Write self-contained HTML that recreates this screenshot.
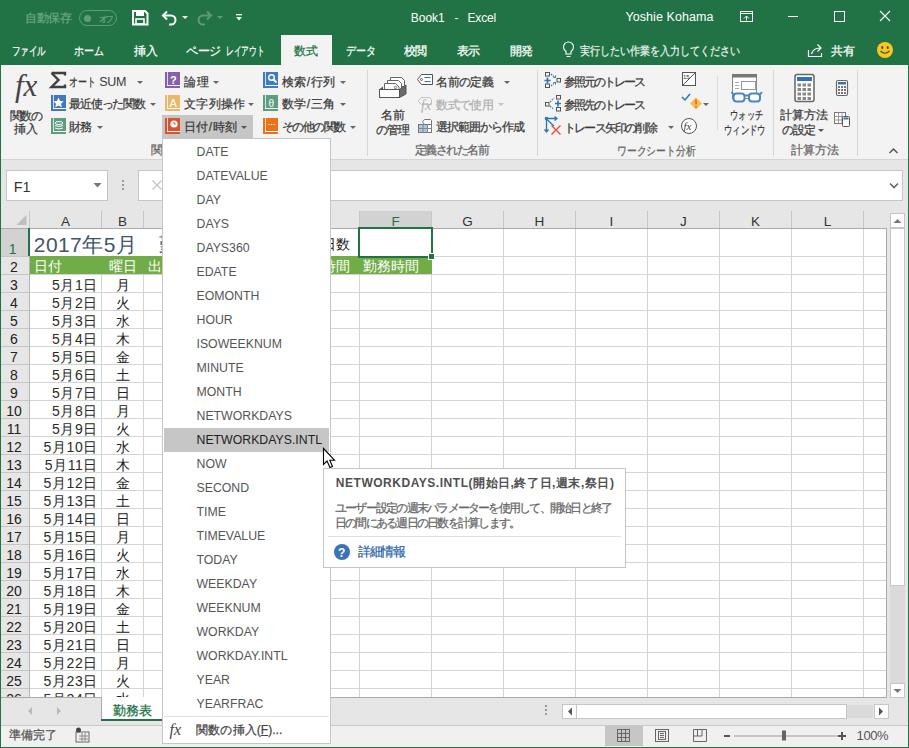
<!DOCTYPE html>
<html><head><meta charset="utf-8">
<style>
*{box-sizing:border-box;margin:0;padding:0}
html,body{width:909px;height:748px;overflow:hidden}
body{position:relative;background:#217346;font-family:"Liberation Sans",sans-serif;font-size:12px;color:#444}
.a{position:absolute;white-space:nowrap}
.j{-webkit-text-stroke:.25px}
.b{position:absolute}
#ribbon{position:absolute;left:1px;top:65px;width:907px;height:95px;background:#f3f3f3;border-bottom:1px solid #d5d5d5}
#fbar{position:absolute;left:1px;top:160px;width:907px;height:538px;background:#e6e6e6}
#tabs{position:absolute;left:1px;top:698px;width:907px;height:27px;background:#e6e6e6}
#status{position:absolute;left:1px;top:725px;width:907px;height:22px;background:#f0f0f0;border-top:1px solid #c8c8c8}
.sep{position:absolute;width:1px;background:#d2d2d2}
.dd{position:absolute;width:0;height:0;border-left:3px solid transparent;border-right:3px solid transparent;border-top:3px solid #666}
</style></head><body>
<!-- title bar icons -->
<div class="b" style="left:79px;top:10px;width:38px;height:16px;border:1px solid #5f9b77;border-radius:8px"></div>
<div class="b" style="left:83.5px;top:14.5px;width:7px;height:7px;border-radius:4px;background:#5f9b77"></div>
<svg class="a" style="left:0;top:0" width="909" height="66">
 <!-- save -->
 <path d="M133 11h12l2.5 2.5V24.5H133z" fill="none" stroke="#fff" stroke-width="2"/>
 <rect x="136" y="12" width="8" height="4" fill="#fff"/>
 <rect x="136" y="19" width="8" height="5" fill="none" stroke="#fff" stroke-width="1.6"/>
 <!-- undo -->
 <path d="M163 15.5h8a4.5 4.5 0 0 1 0 9h-2" fill="none" stroke="#fff" stroke-width="2"/>
 <path d="M167 11.5l-4 4 4 4" fill="none" stroke="#fff" stroke-width="2"/>
 <path d="M182 16h6l-3 3z" fill="#fff"/>
 <!-- redo -->
 <path d="M211 15.5h-8a4.5 4.5 0 0 0 0 9h2" fill="none" stroke="#5f9b77" stroke-width="2"/>
 <path d="M207 11.5l4 4-4 4" fill="none" stroke="#5f9b77" stroke-width="2"/>
 <path d="M217 16h6l-3 3z" fill="#5f9b77"/>
 <!-- customize -->
 <rect x="236" y="14" width="6" height="1.3" fill="#fff"/>
 <path d="M236 17h6l-3 3.5z" fill="#fff"/>
 <!-- ribbon display options -->
 <rect x="740.5" y="11.5" width="12" height="10" fill="none" stroke="#fff"/>
 <line x1="740.5" y1="13.5" x2="752.5" y2="13.5" stroke="#fff"/>
 <path d="M744 18.5l2.5-2.5 2.5 2.5M746.5 16v4.5" fill="none" stroke="#fff"/>
 <!-- minimize -->
 <line x1="788" y1="16.5" x2="798" y2="16.5" stroke="#fff"/>
 <!-- maximize -->
 <rect x="834.5" y="11.5" width="10" height="10" fill="none" stroke="#fff"/>
 <!-- close -->
 <path d="M880 11l10 10M890 11l-10 10" stroke="#fff" stroke-width="1.1"/>
 <!-- active tab -->
 <rect x="281" y="35" width="51" height="31" fill="#f3f3f3"/>
 <!-- lightbulb -->
 <path d="M566 54v-2.5c-1.8-1.2-2.5-2.8-2.5-4.5a5 5 0 0 1 10 0c0 1.7-.7 3.3-2.5 4.5V54z" fill="none" stroke="#fff" stroke-width="1.1"/>
 <line x1="566.5" y1="56.5" x2="570.5" y2="56.5" stroke="#fff" stroke-width="1.1"/>
 <!-- share -->
 <path d="M808.5 50v6.5h13V53" fill="none" stroke="#fff" stroke-width="1.2"/>
 <path d="M811.5 54c1-4 4-6 9-6M817.5 44.5l3.5 3.5-3.5 3.5" fill="none" stroke="#fff" stroke-width="1.2"/>
 <!-- smiley -->
 <circle cx="885" cy="50" r="8" fill="#f7c81e"/>
 <ellipse cx="882.3" cy="47.5" rx="1" ry="1.5" fill="#4a3f2a"/>
 <ellipse cx="887.7" cy="47.5" rx="1" ry="1.5" fill="#4a3f2a"/>
 <path d="M880.5 51q4.5 4.5 9 0" fill="none" stroke="#4a3f2a" stroke-width="1.1"/>
</svg>

<div id="ribbon"></div>
<div id="fbar"></div>

<!-- ribbon icons -->
<svg class="a" style="left:0;top:66px" width="909" height="94">
 <!-- fx big -->
 <text x="15" y="29.5" font-family="Liberation Serif" font-style="italic" font-size="31" fill="#444">fx</text>
 <!-- sigma -->
 <path d="M51.5 7h13.5v2.5M51.5 7l7 7-7 7h13.5v-2.5" fill="none" stroke="#3f3f3f" stroke-width="2.4"/>
 <path d="M137 15h6l-3 3z" fill="#666"/>
 <!-- recent (blue book) -->
 <rect x="51" y="29" width="15" height="16" fill="#4178be"/><rect x="53" y="29" width="1" height="13" fill="#fff" opacity=".75"/><rect x="53" y="42" width="13" height="1" fill="#fff"/>
 
 <path d="M58.5 31.5l1.6 3.4 3.6.4-2.7 2.4.8 3.6-3.3-1.9-3.3 1.9.8-3.6-2.7-2.4 3.6-.4z" fill="#fff"/>
 <path d="M150 37h6l-3 3z" fill="#666"/>
 <!-- finance (green book) -->
 <rect x="51" y="52" width="15" height="16" fill="#5b9e82"/><rect x="53" y="52" width="1" height="13" fill="#fff" opacity=".75"/><rect x="53" y="65" width="13" height="1" fill="#fff"/>
 <ellipse cx="59" cy="57" rx="4" ry="1.5" fill="none" stroke="#fff"/>
 <path d="M55 59.5q4 2 8 0M55 62q4 2 8 0" fill="none" stroke="#fff"/>
 <path d="M97 60h6l-3 3z" fill="#666"/>
 <!-- pressed bg for date -->
 <rect x="162" y="49" width="91" height="23" fill="#c6c6c6"/>
 <!-- logic purple -->
 <rect x="165" y="6" width="15" height="16" fill="#8660a8"/><rect x="167" y="6" width="1" height="13" fill="#fff" opacity=".75"/><rect x="167" y="19" width="13" height="1" fill="#fff"/>
 <text x="170" y="17.5" font-family="Liberation Sans" font-weight="bold" font-size="11" fill="#fff">?</text>
 <path d="M213 15h6l-3 3z" fill="#666"/>
 <!-- text orange-light -->
 <rect x="165" y="29" width="15" height="16" fill="#e9b86a"/><rect x="167" y="29" width="1" height="13" fill="#fff" opacity=".75"/><rect x="167" y="42" width="13" height="1" fill="#fff"/>
 <text x="169.5" y="40.5" font-family="Liberation Sans" font-size="11" fill="#fff">A</text>
 <path d="M248 37h6l-3 3z" fill="#666"/>
 <!-- date red -->
 <rect x="165" y="52" width="15" height="16" fill="#d65532"/><rect x="167" y="52" width="1" height="13" fill="#fff" opacity=".75"/><rect x="167" y="65" width="13" height="1" fill="#fff"/>
 <circle cx="174" cy="58" r="3.6" fill="#fff"/>
 <path d="M174 56v2h1.8" fill="none" stroke="#d65532" stroke-width="1"/>
 <path d="M241 60h6l-3 3z" fill="#555"/>
 <!-- lookup blue -->
 <rect x="263" y="6" width="15" height="16" fill="#3f7cc0"/><rect x="265" y="6" width="1" height="13" fill="#fff" opacity=".75"/><rect x="265" y="19" width="13" height="1" fill="#fff"/>
 <circle cx="271.5" cy="11.5" r="2.8" fill="none" stroke="#fff" stroke-width="1.4"/>
 <path d="M273.5 13.5l3 3" stroke="#fff" stroke-width="1.8"/>
 <path d="M340 15h6l-3 3z" fill="#666"/>
 <!-- math green -->
 <rect x="263" y="29" width="15" height="16" fill="#5b9e82"/><rect x="265" y="29" width="1" height="13" fill="#fff" opacity=".75"/><rect x="265" y="42" width="13" height="1" fill="#fff"/>
 <text x="268.5" y="40.5" font-family="Liberation Sans" font-size="10" fill="#fff">θ</text>
 <path d="M340 37h6l-3 3z" fill="#666"/>
 <!-- more orange -->
 <rect x="263" y="52" width="15" height="16" fill="#e8731c"/><rect x="265" y="52" width="1" height="13" fill="#fff" opacity=".75"/><rect x="265" y="65" width="13" height="1" fill="#fff"/>
 <path d="M268.5 58.5h1.2M271 58.5h1.2M273.5 58.5h1.2" stroke="#fff"/>
 <path d="M350 60h6l-3 3z" fill="#666"/>
 <!-- separators -->
 <rect x="367" y="4" width="1" height="86" fill="#d6d6d6"/>
 <rect x="537" y="4" width="1" height="86" fill="#d6d6d6"/>
 <rect x="717" y="10" width="1" height="54" fill="#dadada"/>
 <rect x="773" y="4" width="1" height="86" fill="#d6d6d6"/>
 <rect x="857" y="4" width="1" height="86" fill="#d6d6d6"/>
 <!-- name manager -->
 <path d="M390.5 11.5h11l3 3v6h-14z" fill="#fff" stroke="#666"/>
 <path d="M387.5 14.5h11l3 3v6h-14z" fill="#fff" stroke="#666"/>
 <path d="M384.5 17.5h11l3.5 3.5v6h-14.5z" fill="#fff" stroke="#666"/>
 <circle cx="395.5" cy="21.5" r="1.2" fill="none" stroke="#777"/>
 <path d="M379 23.5l4-3v3z" fill="#555"/>
 <rect x="379.5" y="23.5" width="20" height="8" fill="#fff" stroke="#555"/>
 <path d="M399.5 23.5l6.5-4.5v9l-6.5 3.5z" fill="#6a6a6a" stroke="#555"/>
 <!-- define name tag -->
 <path d="M421.5 8.5h11v10h-11l-4-5z" fill="#fff" stroke="#555"/>
 <circle cx="421.5" cy="13.5" r="1" fill="none" stroke="#555"/>
 <path d="M424.5 11.5h6M424.5 15.5h6" stroke="#2e74b5" stroke-width="1.1"/>
 <path d="M504 15h6l-3 3z" fill="#666"/>
 <!-- use in formula disabled -->
 <path d="M421.5 31.5h8l2 2v5h-10l-3.5-3.5z" fill="none" stroke="#c4c4c4"/>
 <text x="421" y="44" font-family="Liberation Serif" font-style="italic" font-size="14" fill="#b1b1b1">fx</text>
 <path d="M498 37h6l-3 3z" fill="#c4c4c4"/>
 <!-- create from selection -->
 <rect x="418.5" y="58.5" width="13" height="8" fill="#fff" stroke="#777"/>
 <rect x="419" y="59" width="8" height="7" fill="#a9c8ea"/>
 <path d="M418.5 62.5h13M423 58.5v8M427.5 58.5v8" stroke="#888"/>
 <path d="M424.5 53.5h6l1 1v4h-7l-2-2.5z" fill="#fff" stroke="#777"/>
 <!-- trace precedents -->
 <rect x="545.5" y="6.5" width="4" height="3.5" fill="none" stroke="#555"/>
 <rect x="545.5" y="18" width="4" height="3.5" fill="none" stroke="#555"/>
 <rect x="557" y="12.5" width="3.5" height="3.5" fill="none" stroke="#555"/>
 <path d="M544.5 14.5h6M547.5 11.5v6" stroke="#2e74b5" stroke-width="1.6"/>
 <path d="M551 8l4 3.5M551 20l4-3.5" stroke="#2e74b5" stroke-width="1.1" stroke-dasharray="1.5 1"/>
 <path d="M553.5 11.5h2v-2M553.5 16.5h2v2" fill="none" stroke="#2e74b5"/>
 <!-- trace dependents -->
 <rect x="545.5" y="36.5" width="3.5" height="3.5" fill="none" stroke="#555"/>
 <rect x="556.5" y="29.5" width="4" height="3.5" fill="none" stroke="#555"/>
 <rect x="556.5" y="41.5" width="4" height="3.5" fill="none" stroke="#555"/>
 <path d="M555 37.5h6M558 34.5v6" stroke="#2e74b5" stroke-width="1.6"/>
 <path d="M550 36l4-4M550 40l4 3.5" stroke="#2e74b5" stroke-width="1.1" stroke-dasharray="1.5 1"/>
 <!-- remove arrows -->
 <circle cx="546.5" cy="52.5" r="1.8" fill="#2e74b5"/>
 <path d="M546.5 53v13M544.5 63.5l2 2.5 2-2.5M547 52.5h10M554.5 50.5l2.5 2-2.5 2M547.5 54l6.5 6" stroke="#2e74b5" stroke-width="1.3" fill="none"/>
 <path d="M551.5 59.5l9 9M560.5 59.5l-9 9" stroke="#e0523a" stroke-width="1.4"/>
 <path d="M668 60h6l-3 3z" fill="#666"/>
 <!-- show formulas -->
 <rect x="682.5" y="6.5" width="13" height="13" fill="#fff" stroke="#555"/>
 <path d="M682.5 19.5l13-13" stroke="#555"/>
 <text x="683" y="13" font-family="Liberation Sans" font-size="6" fill="#333">15</text>
 <!-- error checking -->
 <path d="M682 31l3 3 5-6" fill="none" stroke="#2e74b5" stroke-width="1.5"/>
 <path d="M690 37.5l6-6 6 6-6 6z" fill="#f5c04a"/>
 <rect x="695.3" y="33.5" width="1.4" height="5" fill="#d9534f"/>
 <rect x="695.3" y="40" width="1.4" height="1.4" fill="#d9534f"/>
 <path d="M703 37h6l-3 3z" fill="#666"/>
 <!-- evaluate formula -->
 <circle cx="689" cy="60" r="7.5" fill="#fff" stroke="#555"/>
 <text x="683.5" y="64" font-family="Liberation Serif" font-style="italic" font-size="11" fill="#444">fx</text>
 <!-- watch window -->
 <rect x="732.5" y="8.5" width="24" height="24" fill="#fff" stroke="#888"/>
 <rect x="732" y="8" width="25" height="3.5" fill="#777"/>
 <rect x="741.5" y="15.5" width="14" height="8" fill="#fff" stroke="#999"/>
 <path d="M735 16.5h4M735 19.5h4M735 22.5h4" stroke="#aaa"/>
 <rect x="733.5" y="27.5" width="11" height="8" rx="3" fill="#fff" stroke="#4a86c5" stroke-width="2"/>
 <rect x="749" y="27.5" width="11" height="8" rx="3" fill="#fff" stroke="#4a86c5" stroke-width="2"/>
 <path d="M744.5 29.5h4.5M733.5 28.5l-2-2.5M760 28.5l2-2.5" stroke="#4a86c5" stroke-width="2"/>
 <!-- calc options big -->
 <rect x="795" y="8.5" width="19" height="27" rx="2" fill="#fff" stroke="#666" stroke-width="1.5"/>
 <rect x="797" y="11" width="15" height="4" fill="#2e74b5"/>
 <g fill="#888"><rect x="797.5" y="17.5" width="3.5" height="3" /><rect x="802.5" y="17.5" width="3.5" height="3" /><rect x="807.5" y="17.5" width="3.5" height="3" /><rect x="797.5" y="22.0" width="3.5" height="3" /><rect x="802.5" y="22.0" width="3.5" height="3" /><rect x="807.5" y="22.0" width="3.5" height="3" /><rect x="797.5" y="26.5" width="3.5" height="3" /><rect x="802.5" y="26.5" width="3.5" height="3" /><rect x="807.5" y="26.5" width="3.5" height="3" /><rect x="797.5" y="31.0" width="3.5" height="3" /><rect x="802.5" y="31.0" width="3.5" height="3" /><rect x="807.5" y="31.0" width="3.5" height="3" /></g>
 <path d="M818 63h6l-3 3z" fill="#555"/>
 <!-- calc now small -->
 <rect x="836.5" y="14.5" width="11" height="15" rx="1.5" fill="#fff" stroke="#666" stroke-width="1.2"/>
 <rect x="838" y="16" width="8" height="2.5" fill="#2e74b5"/>
 <g fill="#777"><rect x="838" y="20" width="2" height="2"/><rect x="841" y="20" width="2" height="2"/><rect x="844" y="20" width="2" height="2"/><rect x="838" y="23" width="2" height="2"/><rect x="841" y="23" width="2" height="2"/><rect x="844" y="23" width="2" height="2"/><rect x="838" y="26" width="2" height="2"/><rect x="841" y="26" width="2" height="2"/><rect x="844" y="26" width="2" height="2"/></g>
 <!-- calc sheet -->
 <rect x="834.5" y="46.5" width="11" height="11" fill="#fff" stroke="#777"/>
 <path d="M834.5 50.5h11M834.5 54h11M838.5 46.5v11M842 46.5v11" stroke="#999"/>
 <rect x="842.5" y="50.5" width="7" height="10" rx="1" fill="#fff" stroke="#555"/>
 <rect x="843.5" y="51.5" width="5" height="2" fill="#2e74b5"/>
 <!-- collapse -->
 <path d="M889.5 87l4-4 4 4" fill="none" stroke="#555" stroke-width="1.5"/>
</svg>

<!-- formula bar -->
<div class="b" style="left:6px;top:170px;width:102px;height:31px;background:#fff;border:1px solid #c6c6c6"></div>
<div class="b" style="left:138px;top:170px;width:765px;height:31px;background:#fff;border:1px solid #c6c6c6"></div>
<svg class="a" style="left:0;top:160px" width="909" height="51">
 <path d="M93.5 23h8l-4 4.5z" fill="#777"/>
 <g fill="#999"><rect x="122" y="20" width="2" height="2"/><rect x="122" y="24" width="2" height="2"/><rect x="122" y="28" width="2" height="2"/></g>
 <path d="M152.5 20.5l9 9M161.5 20.5l-9 9" stroke="#c4c4c4" stroke-width="1.3"/>
 <path d="M890 23.5l4 4 4-4" fill="none" stroke="#666" stroke-width="1.6"/>
</svg>

<!-- grid -->
<svg class="a" style="left:0;top:0" width="909" height="748">
<rect x="30" y="228" width="856" height="469" fill="#fff"/>
<line x1="101.5" y1="274" x2="101.5" y2="697" stroke="#d4d4d4"/>
<line x1="143.5" y1="274" x2="143.5" y2="697" stroke="#d4d4d4"/>
<line x1="215.5" y1="274" x2="215.5" y2="697" stroke="#d4d4d4"/>
<line x1="287.5" y1="274" x2="287.5" y2="697" stroke="#d4d4d4"/>
<line x1="359.5" y1="228" x2="359.5" y2="697" stroke="#d4d4d4"/>
<line x1="431.5" y1="228" x2="431.5" y2="697" stroke="#d4d4d4"/>
<line x1="503.5" y1="228" x2="503.5" y2="697" stroke="#d4d4d4"/>
<line x1="575.5" y1="228" x2="575.5" y2="697" stroke="#d4d4d4"/>
<line x1="647.5" y1="228" x2="647.5" y2="697" stroke="#d4d4d4"/>
<line x1="719.5" y1="228" x2="719.5" y2="697" stroke="#d4d4d4"/>
<line x1="791.5" y1="228" x2="791.5" y2="697" stroke="#d4d4d4"/>
<line x1="863.5" y1="228" x2="863.5" y2="697" stroke="#d4d4d4"/>
<line x1="30" y1="256.5" x2="886" y2="256.5" stroke="#d4d4d4"/>
<line x1="30" y1="274.5" x2="886" y2="274.5" stroke="#d4d4d4"/>
<line x1="30" y1="292.5" x2="886" y2="292.5" stroke="#d4d4d4"/>
<line x1="30" y1="310.5" x2="886" y2="310.5" stroke="#d4d4d4"/>
<line x1="30" y1="328.5" x2="886" y2="328.5" stroke="#d4d4d4"/>
<line x1="30" y1="346.5" x2="886" y2="346.5" stroke="#d4d4d4"/>
<line x1="30" y1="364.5" x2="886" y2="364.5" stroke="#d4d4d4"/>
<line x1="30" y1="382.5" x2="886" y2="382.5" stroke="#d4d4d4"/>
<line x1="30" y1="400.5" x2="886" y2="400.5" stroke="#d4d4d4"/>
<line x1="30" y1="418.5" x2="886" y2="418.5" stroke="#d4d4d4"/>
<line x1="30" y1="436.5" x2="886" y2="436.5" stroke="#d4d4d4"/>
<line x1="30" y1="454.5" x2="886" y2="454.5" stroke="#d4d4d4"/>
<line x1="30" y1="472.5" x2="886" y2="472.5" stroke="#d4d4d4"/>
<line x1="30" y1="490.5" x2="886" y2="490.5" stroke="#d4d4d4"/>
<line x1="30" y1="508.5" x2="886" y2="508.5" stroke="#d4d4d4"/>
<line x1="30" y1="526.5" x2="886" y2="526.5" stroke="#d4d4d4"/>
<line x1="30" y1="544.5" x2="886" y2="544.5" stroke="#d4d4d4"/>
<line x1="30" y1="562.5" x2="886" y2="562.5" stroke="#d4d4d4"/>
<line x1="30" y1="580.5" x2="886" y2="580.5" stroke="#d4d4d4"/>
<line x1="30" y1="598.5" x2="886" y2="598.5" stroke="#d4d4d4"/>
<line x1="30" y1="616.5" x2="886" y2="616.5" stroke="#d4d4d4"/>
<line x1="30" y1="634.5" x2="886" y2="634.5" stroke="#d4d4d4"/>
<line x1="30" y1="652.5" x2="886" y2="652.5" stroke="#d4d4d4"/>
<line x1="30" y1="670.5" x2="886" y2="670.5" stroke="#d4d4d4"/>
<line x1="30" y1="688.5" x2="886" y2="688.5" stroke="#d4d4d4"/>
<rect x="30" y="256" width="402" height="18" fill="#70ad47"/>
<line x1="29.5" y1="211" x2="29.5" y2="228" stroke="#c6c6c6"/>
<line x1="101.5" y1="211" x2="101.5" y2="228" stroke="#c6c6c6"/>
<line x1="143.5" y1="211" x2="143.5" y2="228" stroke="#c6c6c6"/>
<line x1="215.5" y1="211" x2="215.5" y2="228" stroke="#c6c6c6"/>
<line x1="287.5" y1="211" x2="287.5" y2="228" stroke="#c6c6c6"/>
<line x1="359.5" y1="211" x2="359.5" y2="228" stroke="#c6c6c6"/>
<line x1="431.5" y1="211" x2="431.5" y2="228" stroke="#c6c6c6"/>
<line x1="503.5" y1="211" x2="503.5" y2="228" stroke="#c6c6c6"/>
<line x1="575.5" y1="211" x2="575.5" y2="228" stroke="#c6c6c6"/>
<line x1="647.5" y1="211" x2="647.5" y2="228" stroke="#c6c6c6"/>
<line x1="719.5" y1="211" x2="719.5" y2="228" stroke="#c6c6c6"/>
<line x1="791.5" y1="211" x2="791.5" y2="228" stroke="#c6c6c6"/>
<line x1="863.5" y1="211" x2="863.5" y2="228" stroke="#c6c6c6"/>
<line x1="1" y1="256.5" x2="29" y2="256.5" stroke="#c6c6c6"/>
<line x1="1" y1="274.5" x2="29" y2="274.5" stroke="#c6c6c6"/>
<line x1="1" y1="292.5" x2="29" y2="292.5" stroke="#c6c6c6"/>
<line x1="1" y1="310.5" x2="29" y2="310.5" stroke="#c6c6c6"/>
<line x1="1" y1="328.5" x2="29" y2="328.5" stroke="#c6c6c6"/>
<line x1="1" y1="346.5" x2="29" y2="346.5" stroke="#c6c6c6"/>
<line x1="1" y1="364.5" x2="29" y2="364.5" stroke="#c6c6c6"/>
<line x1="1" y1="382.5" x2="29" y2="382.5" stroke="#c6c6c6"/>
<line x1="1" y1="400.5" x2="29" y2="400.5" stroke="#c6c6c6"/>
<line x1="1" y1="418.5" x2="29" y2="418.5" stroke="#c6c6c6"/>
<line x1="1" y1="436.5" x2="29" y2="436.5" stroke="#c6c6c6"/>
<line x1="1" y1="454.5" x2="29" y2="454.5" stroke="#c6c6c6"/>
<line x1="1" y1="472.5" x2="29" y2="472.5" stroke="#c6c6c6"/>
<line x1="1" y1="490.5" x2="29" y2="490.5" stroke="#c6c6c6"/>
<line x1="1" y1="508.5" x2="29" y2="508.5" stroke="#c6c6c6"/>
<line x1="1" y1="526.5" x2="29" y2="526.5" stroke="#c6c6c6"/>
<line x1="1" y1="544.5" x2="29" y2="544.5" stroke="#c6c6c6"/>
<line x1="1" y1="562.5" x2="29" y2="562.5" stroke="#c6c6c6"/>
<line x1="1" y1="580.5" x2="29" y2="580.5" stroke="#c6c6c6"/>
<line x1="1" y1="598.5" x2="29" y2="598.5" stroke="#c6c6c6"/>
<line x1="1" y1="616.5" x2="29" y2="616.5" stroke="#c6c6c6"/>
<line x1="1" y1="634.5" x2="29" y2="634.5" stroke="#c6c6c6"/>
<line x1="1" y1="652.5" x2="29" y2="652.5" stroke="#c6c6c6"/>
<line x1="1" y1="670.5" x2="29" y2="670.5" stroke="#c6c6c6"/>
<line x1="1" y1="688.5" x2="29" y2="688.5" stroke="#c6c6c6"/>
<line x1="29.5" y1="228" x2="29.5" y2="697" stroke="#b5b5b5"/>
</svg>
<svg class="a" style="left:0;top:0" width="909" height="748">
  <!-- header bottom -->
 <rect x="1" y="228" width="886" height="1" fill="#ababab"/>
 <!-- F column header selected -->
 <rect x="360" y="211" width="71" height="17" fill="#d2d2d2"/>
 <!-- row 1 header selected -->
 <rect x="1" y="229" width="27" height="27" fill="#d2d2d2"/>
 <rect x="28" y="228" width="2" height="28" fill="#217346"/>
 <!-- select all triangle -->
 <path d="M26.5 215v10h-10z" fill="#bfbfbf"/>
 <!-- grid right/bottom border -->
 <rect x="886" y="228" width="1" height="470" fill="#ababab"/>
 <rect x="1" y="697" width="886" height="1" fill="#ababab"/>
 <!-- F1 selection -->
 <rect x="359" y="228" width="73" height="29" fill="none" stroke="#217346" stroke-width="2"/>
 <rect x="428" y="253" width="7" height="7" fill="#fff"/>
 <rect x="429" y="254" width="5" height="5" fill="#217346"/>
 <!-- vertical scrollbar -->
 <rect x="890.5" y="213.5" width="14" height="14" fill="#fff" stroke="#c6c6c6"/>
 <path d="M893.5 223h8l-4-4z" fill="#777"/>
 <rect x="890" y="228" width="15" height="455" fill="#dadada"/>
 <rect x="890.5" y="228.5" width="14" height="357" fill="#fff" stroke="#c6c6c6"/>
 <rect x="890.5" y="683.5" width="14" height="14" fill="#fff" stroke="#c6c6c6"/>
 <path d="M893.5 689h8l-4 4z" fill="#777"/>
</svg>


<div class="b" style="left:0;top:0;width:887px;height:697px;overflow:hidden"><div class="a" style="left:61.0px;top:213.5px;font-size:13.5px;line-height:16px;color:#333;">A</div>
<div class="a" style="left:118.0px;top:213.5px;font-size:13.5px;line-height:16px;color:#333;">B</div>
<div class="a" style="left:391.4px;top:213.5px;font-size:13.5px;line-height:16px;color:#217346;">F</div>
<div class="a" style="left:462.2px;top:213.5px;font-size:13.5px;line-height:16px;color:#333;">G</div>
<div class="a" style="left:534.6px;top:213.5px;font-size:13.5px;line-height:16px;color:#333;">H</div>
<div class="a" style="left:609.6px;top:213.5px;font-size:13.5px;line-height:16px;color:#333;">I</div>
<div class="a" style="left:680.1px;top:213.5px;font-size:13.5px;line-height:16px;color:#333;">J</div>
<div class="a" style="left:751.0px;top:213.5px;font-size:13.5px;line-height:16px;color:#333;">K</div>
<div class="a" style="left:823.7px;top:213.5px;font-size:13.5px;line-height:16px;color:#333;">L</div>
<div class="a" style="left:33.8px;top:236.5px;font-size:21px;line-height:16px;color:#44546a;letter-spacing:0.43px;">2017年5月</div>
<div class="a" style="left:158.6px;top:236.5px;font-size:21px;line-height:16px;color:#44546a;">勤</div>
<div class="a" style="left:322.0px;top:235.5px;font-size:14px;line-height:16px;color:#222;">日数</div>
<div class="a" style="left:33.8px;top:258.0px;font-size:14px;line-height:16px;color:#fff;">日付</div>
<div class="a" style="left:108.8px;top:258.0px;font-size:14px;line-height:16px;color:#fff;">曜日</div>
<div class="a" style="left:147.5px;top:258.0px;font-size:14px;line-height:16px;color:#fff;">出</div>
<div class="a" style="left:322.0px;top:258.0px;font-size:14px;line-height:16px;color:#fff;">時間</div>
<div class="a" style="left:363.0px;top:258.0px;font-size:14px;line-height:16px;color:#fff;">勤務時間</div>
<div class="a" style="left:52.0px;top:277.0px;font-size:14px;line-height:16px;color:#2a2a2a;letter-spacing:.6px;">5月1日</div>
<div class="a" style="left:115.5px;top:277.0px;font-size:14px;line-height:16px;color:#222;">月</div>
<div class="a" style="left:52.0px;top:295.0px;font-size:14px;line-height:16px;color:#2a2a2a;letter-spacing:.6px;">5月2日</div>
<div class="a" style="left:115.5px;top:295.0px;font-size:14px;line-height:16px;color:#222;">火</div>
<div class="a" style="left:52.0px;top:313.0px;font-size:14px;line-height:16px;color:#2a2a2a;letter-spacing:.6px;">5月3日</div>
<div class="a" style="left:115.5px;top:313.0px;font-size:14px;line-height:16px;color:#222;">水</div>
<div class="a" style="left:52.0px;top:331.0px;font-size:14px;line-height:16px;color:#2a2a2a;letter-spacing:.6px;">5月4日</div>
<div class="a" style="left:115.5px;top:331.0px;font-size:14px;line-height:16px;color:#222;">木</div>
<div class="a" style="left:52.0px;top:349.0px;font-size:14px;line-height:16px;color:#2a2a2a;letter-spacing:.6px;">5月5日</div>
<div class="a" style="left:115.5px;top:349.0px;font-size:14px;line-height:16px;color:#222;">金</div>
<div class="a" style="left:52.0px;top:367.0px;font-size:14px;line-height:16px;color:#2a2a2a;letter-spacing:.6px;">5月6日</div>
<div class="a" style="left:115.5px;top:367.0px;font-size:14px;line-height:16px;color:#222;">土</div>
<div class="a" style="left:52.0px;top:385.0px;font-size:14px;line-height:16px;color:#2a2a2a;letter-spacing:.6px;">5月7日</div>
<div class="a" style="left:115.5px;top:385.0px;font-size:14px;line-height:16px;color:#222;">日</div>
<div class="a" style="left:52.0px;top:403.0px;font-size:14px;line-height:16px;color:#2a2a2a;letter-spacing:.6px;">5月8日</div>
<div class="a" style="left:115.5px;top:403.0px;font-size:14px;line-height:16px;color:#222;">月</div>
<div class="a" style="left:52.0px;top:421.0px;font-size:14px;line-height:16px;color:#2a2a2a;letter-spacing:.6px;">5月9日</div>
<div class="a" style="left:115.5px;top:421.0px;font-size:14px;line-height:16px;color:#222;">火</div>
<div class="a" style="left:43.6px;top:439.0px;font-size:14px;line-height:16px;color:#2a2a2a;letter-spacing:.6px;">5月10日</div>
<div class="a" style="left:115.5px;top:439.0px;font-size:14px;line-height:16px;color:#222;">水</div>
<div class="a" style="left:44.7px;top:457.0px;font-size:14px;line-height:16px;color:#2a2a2a;letter-spacing:.6px;">5月11日</div>
<div class="a" style="left:115.5px;top:457.0px;font-size:14px;line-height:16px;color:#222;">木</div>
<div class="a" style="left:43.6px;top:475.0px;font-size:14px;line-height:16px;color:#2a2a2a;letter-spacing:.6px;">5月12日</div>
<div class="a" style="left:115.5px;top:475.0px;font-size:14px;line-height:16px;color:#222;">金</div>
<div class="a" style="left:43.6px;top:493.0px;font-size:14px;line-height:16px;color:#2a2a2a;letter-spacing:.6px;">5月13日</div>
<div class="a" style="left:115.5px;top:493.0px;font-size:14px;line-height:16px;color:#222;">土</div>
<div class="a" style="left:43.6px;top:511.0px;font-size:14px;line-height:16px;color:#2a2a2a;letter-spacing:.6px;">5月14日</div>
<div class="a" style="left:115.5px;top:511.0px;font-size:14px;line-height:16px;color:#222;">日</div>
<div class="a" style="left:43.6px;top:529.0px;font-size:14px;line-height:16px;color:#2a2a2a;letter-spacing:.6px;">5月15日</div>
<div class="a" style="left:115.5px;top:529.0px;font-size:14px;line-height:16px;color:#222;">月</div>
<div class="a" style="left:43.6px;top:547.0px;font-size:14px;line-height:16px;color:#2a2a2a;letter-spacing:.6px;">5月16日</div>
<div class="a" style="left:115.5px;top:547.0px;font-size:14px;line-height:16px;color:#222;">火</div>
<div class="a" style="left:43.6px;top:565.0px;font-size:14px;line-height:16px;color:#2a2a2a;letter-spacing:.6px;">5月17日</div>
<div class="a" style="left:115.5px;top:565.0px;font-size:14px;line-height:16px;color:#222;">水</div>
<div class="a" style="left:43.6px;top:583.0px;font-size:14px;line-height:16px;color:#2a2a2a;letter-spacing:.6px;">5月18日</div>
<div class="a" style="left:115.5px;top:583.0px;font-size:14px;line-height:16px;color:#222;">木</div>
<div class="a" style="left:43.6px;top:601.0px;font-size:14px;line-height:16px;color:#2a2a2a;letter-spacing:.6px;">5月19日</div>
<div class="a" style="left:115.5px;top:601.0px;font-size:14px;line-height:16px;color:#222;">金</div>
<div class="a" style="left:43.6px;top:619.0px;font-size:14px;line-height:16px;color:#2a2a2a;letter-spacing:.6px;">5月20日</div>
<div class="a" style="left:115.5px;top:619.0px;font-size:14px;line-height:16px;color:#222;">土</div>
<div class="a" style="left:43.6px;top:637.0px;font-size:14px;line-height:16px;color:#2a2a2a;letter-spacing:.6px;">5月21日</div>
<div class="a" style="left:115.5px;top:637.0px;font-size:14px;line-height:16px;color:#222;">日</div>
<div class="a" style="left:43.6px;top:655.0px;font-size:14px;line-height:16px;color:#2a2a2a;letter-spacing:.6px;">5月22日</div>
<div class="a" style="left:115.5px;top:655.0px;font-size:14px;line-height:16px;color:#222;">月</div>
<div class="a" style="left:43.6px;top:673.0px;font-size:14px;line-height:16px;color:#2a2a2a;letter-spacing:.6px;">5月23日</div>
<div class="a" style="left:115.5px;top:673.0px;font-size:14px;line-height:16px;color:#222;">火</div>
<div class="a" style="left:43.6px;top:691.0px;font-size:14px;line-height:16px;color:#2a2a2a;letter-spacing:.6px;">5月24日</div>
<div class="a" style="left:115.5px;top:691.0px;font-size:14px;line-height:16px;color:#222;">水</div>
<div class="a" style="left:8.7px;top:241.0px;font-size:14px;line-height:16px;color:#217346;">1</div>
<div class="a" style="left:10.1px;top:259.0px;font-size:14px;line-height:16px;color:#222;">2</div>
<div class="a" style="left:10.1px;top:277.0px;font-size:14px;line-height:16px;color:#222;">3</div>
<div class="a" style="left:10.1px;top:295.0px;font-size:14px;line-height:16px;color:#222;">4</div>
<div class="a" style="left:10.1px;top:313.0px;font-size:14px;line-height:16px;color:#222;">5</div>
<div class="a" style="left:10.1px;top:331.0px;font-size:14px;line-height:16px;color:#222;">6</div>
<div class="a" style="left:10.1px;top:349.0px;font-size:14px;line-height:16px;color:#222;">7</div>
<div class="a" style="left:10.1px;top:367.0px;font-size:14px;line-height:16px;color:#222;">8</div>
<div class="a" style="left:10.1px;top:385.0px;font-size:14px;line-height:16px;color:#222;">9</div>
<div class="a" style="left:6.2px;top:403.0px;font-size:14px;line-height:16px;color:#222;">10</div>
<div class="a" style="left:6.7px;top:421.0px;font-size:14px;line-height:16px;color:#222;">11</div>
<div class="a" style="left:6.2px;top:439.0px;font-size:14px;line-height:16px;color:#222;">12</div>
<div class="a" style="left:6.2px;top:457.0px;font-size:14px;line-height:16px;color:#222;">13</div>
<div class="a" style="left:6.2px;top:475.0px;font-size:14px;line-height:16px;color:#222;">14</div>
<div class="a" style="left:6.2px;top:493.0px;font-size:14px;line-height:16px;color:#222;">15</div>
<div class="a" style="left:6.2px;top:511.0px;font-size:14px;line-height:16px;color:#222;">16</div>
<div class="a" style="left:6.2px;top:529.0px;font-size:14px;line-height:16px;color:#222;">17</div>
<div class="a" style="left:6.2px;top:547.0px;font-size:14px;line-height:16px;color:#222;">18</div>
<div class="a" style="left:6.2px;top:565.0px;font-size:14px;line-height:16px;color:#222;">19</div>
<div class="a" style="left:6.2px;top:583.0px;font-size:14px;line-height:16px;color:#222;">20</div>
<div class="a" style="left:6.2px;top:601.0px;font-size:14px;line-height:16px;color:#222;">21</div>
<div class="a" style="left:6.2px;top:619.0px;font-size:14px;line-height:16px;color:#222;">22</div>
<div class="a" style="left:6.2px;top:637.0px;font-size:14px;line-height:16px;color:#222;">23</div>
<div class="a" style="left:6.2px;top:655.0px;font-size:14px;line-height:16px;color:#222;">24</div>
<div class="a" style="left:6.2px;top:673.0px;font-size:14px;line-height:16px;color:#222;">25</div>
<div class="a" style="left:6.2px;top:691.0px;font-size:14px;line-height:16px;color:#222;">26</div></div>
<div id="tabs"></div>
<div id="status"></div>
<svg class="a" style="left:0;top:697px" width="909" height="51">
 <!-- tab nav arrows -->
 <path d="M32 10v8l-4-4z" fill="#b9b9b9"/>
 <path d="M57 10v8l4-4z" fill="#b9b9b9"/>
 <!-- active sheet tab -->
 <rect x="101" y="0" width="70" height="24" fill="#fff"/>
 <rect x="101" y="0" width="1" height="24" fill="#ababab"/>
 <rect x="101" y="22" width="70" height="2" fill="#217346"/>
 <!-- dots -->
 <g fill="#999"><rect x="545" y="8" width="2" height="2"/><rect x="545" y="12" width="2" height="2"/><rect x="545" y="16" width="2" height="2"/></g>
 <!-- h scrollbar -->
 <rect x="562.5" y="7.5" width="14" height="14" fill="#fff" stroke="#c6c6c6"/>
 <path d="M572 10.5v8l-4-4z" fill="#555"/>
 <rect x="576.5" y="7.5" width="270" height="14" fill="#fff" stroke="#c6c6c6"/>
 <rect x="847" y="8" width="26" height="13" fill="#dadada"/>
 <rect x="874.5" y="7.5" width="14" height="14" fill="#fff" stroke="#c6c6c6"/>
 <path d="M879 10.5v8l4-4z" fill="#555"/>
 <!-- status macro icon -->
 <rect x="76" y="35" width="13" height="10" fill="none" stroke="#666"/>
 <circle cx="78.5" cy="33" r="2.5" fill="#444"/>
 <path d="M79 39h9M79 42h9M82 36v8M85 36v8" stroke="#888"/>
 <!-- view buttons -->
 <rect x="605" y="29" width="38" height="20" fill="#c6c6c6"/>
 <g fill="none" stroke="#666">
  <rect x="617.5" y="32.5" width="12" height="12"/>
  <path d="M617.5 36.5h12M617.5 40.5h12M621.5 32.5v12M625.5 32.5v12"/>
  <rect x="655.5" y="32.5" width="13" height="12"/>
  <rect x="658.5" y="34.5" width="7" height="8"/>
  <path d="M660 36.5h4M660 38.5h4M660 40.5h4"/>
  <path d="M693.5 32.5h13v12h-13z M697.5 32.5v6.5h4.5v-6.5M693.5 39h4"/>
 </g>
 <rect x="724" y="38" width="6" height="2" fill="#555"/>
 <rect x="734" y="38.5" width="106" height="1" fill="#999"/>
 <rect x="782" y="33.5" width="4" height="10" fill="#666"/>
 <path d="M838 39h8M842 35v8" stroke="#555" stroke-width="2"/>
</svg>
<div class="a j" style="left:25.0px;top:9.5px;font-size:11.5px;line-height:16px;color:#6aa482;letter-spacing:-0.33px;">自動保存</div>
<div class="a j" style="left:98.5px;top:10.5px;font-size:9px;line-height:16px;color:#6aa482;letter-spacing:-2.5px;">オフ</div>
<div class="a" style="left:410.8px;top:9.5px;font-size:12px;line-height:16px;color:#fff;letter-spacing:-0.01px;">Book1</div>
<div class="a" style="left:454.4px;top:9.5px;font-size:12px;line-height:16px;color:#fff;">-</div>
<div class="a" style="left:467.5px;top:9.5px;font-size:12px;line-height:16px;color:#fff;letter-spacing:-0.14px;">Excel</div>
<div class="a" style="left:625.5px;top:8.5px;font-size:12.5px;line-height:16px;color:#fff;letter-spacing:0.07px;">Yoshie Kohama</div>
<div class="a j" style="left:12.3px;top:43.0px;font-size:12px;line-height:16px;color:#fff;transform:scaleX(0.708);transform-origin:0 0;">ファイル</div>
<div class="a j" style="left:74.0px;top:43.0px;font-size:12px;line-height:16px;color:#fff;transform:scaleX(0.833);transform-origin:0 0;">ホーム</div>
<div class="a j" style="left:134.0px;top:43.0px;font-size:12px;line-height:16px;color:#fff;">挿入</div>
<div class="a j" style="left:186.4px;top:43.0px;font-size:12px;line-height:16px;color:#fff;letter-spacing:-0.75px;">ページ</div>
<div class="a j" style="left:226.4px;top:43.0px;font-size:12px;line-height:16px;color:#fff;transform:scaleX(0.643);transform-origin:0 0;">レイアウト</div>
<div class="a j" style="left:294.0px;top:43.0px;font-size:12px;line-height:16px;color:#217346;">数式</div>
<div class="a j" style="left:346.0px;top:43.0px;font-size:12px;line-height:16px;color:#fff;transform:scaleX(0.833);transform-origin:0 0;">データ</div>
<div class="a j" style="left:404.0px;top:43.0px;font-size:12px;line-height:16px;color:#fff;letter-spacing:-1.00px;">校閲</div>
<div class="a j" style="left:457.0px;top:43.0px;font-size:12px;line-height:16px;color:#fff;letter-spacing:-1.00px;">表示</div>
<div class="a j" style="left:510.0px;top:43.0px;font-size:12px;line-height:16px;color:#fff;letter-spacing:-1.00px;">開発</div>
<div class="a j" style="left:580.0px;top:43.0px;font-size:12px;line-height:16px;color:#e9f1ec;transform:scaleX(0.833);transform-origin:0 0;">実行したい作業を入力してください</div>
<div class="a j" style="left:831.0px;top:43.0px;font-size:12px;line-height:16px;color:#fff;">共有</div>
<div class="a j" style="left:9.7px;top:107.5px;font-size:12px;line-height:16px;color:#3a3a3a;letter-spacing:-1.35px;">関数の</div>
<div class="a j" style="left:14.0px;top:121.0px;font-size:12px;line-height:16px;color:#3a3a3a;">挿入</div>
<div class="a j" style="left:68.8px;top:73.5px;font-size:12px;line-height:16px;color:#3a3a3a;transform:scaleX(0.750);transform-origin:0 0;">オート</div>
<div class="a" style="left:99.2px;top:73.5px;font-size:12.5px;line-height:16px;color:#3a3a3a;letter-spacing:-0.24px;">SUM</div>
<div class="a j" style="left:68.8px;top:96.0px;font-size:12px;line-height:16px;color:#3a3a3a;letter-spacing:-1.08px;">最近使った関数</div>
<div class="a j" style="left:68.8px;top:119.0px;font-size:12px;line-height:16px;color:#3a3a3a;letter-spacing:-0.40px;">財務</div>
<div class="a j" style="left:184.0px;top:73.5px;font-size:12px;line-height:16px;color:#3a3a3a;letter-spacing:1.00px;">論理</div>
<div class="a j" style="left:184.0px;top:96.0px;font-size:12px;line-height:16px;color:#3a3a3a;letter-spacing:0.25px;">文字列操作</div>
<div class="a j" style="left:184.0px;top:119.0px;font-size:12px;line-height:16px;color:#3a3a3a;letter-spacing:0.41px;">日付/時刻</div>
<div class="a j" style="left:282.0px;top:73.5px;font-size:12px;line-height:16px;color:#3a3a3a;letter-spacing:0.41px;">検索/行列</div>
<div class="a j" style="left:282.0px;top:96.0px;font-size:12px;line-height:16px;color:#3a3a3a;letter-spacing:0.41px;">数学/三角</div>
<div class="a j" style="left:282.0px;top:119.0px;font-size:12px;line-height:16px;color:#3a3a3a;letter-spacing:-1.60px;">その他の関数</div>
<div class="a j" style="left:151.0px;top:142.0px;font-size:12px;line-height:16px;color:#666;">関</div>
<div class="a j" style="left:380.8px;top:107.2px;font-size:12px;line-height:16px;color:#3a3a3a;">名前</div>
<div class="a j" style="left:375.8px;top:122.4px;font-size:12px;line-height:16px;color:#3a3a3a;letter-spacing:-1.00px;">の管理</div>
<div class="a j" style="left:436.2px;top:73.8px;font-size:12px;line-height:16px;color:#3a3a3a;letter-spacing:-0.62px;">名前の定義</div>
<div class="a j" style="left:436.2px;top:96.6px;font-size:12px;line-height:16px;color:#b1b1b1;letter-spacing:-0.62px;">数式で使用</div>
<div class="a j" style="left:436.2px;top:119.4px;font-size:12px;line-height:16px;color:#3a3a3a;letter-spacing:-1.00px;">選択範囲から作成</div>
<div class="a j" style="left:414.5px;top:142.2px;font-size:12px;line-height:16px;color:#666;letter-spacing:-1.50px;">定義された名前</div>
<div class="a j" style="left:564.0px;top:73.7px;font-size:12px;line-height:16px;color:#3a3a3a;letter-spacing:-2.00px;">参照元のトレース</div>
<div class="a j" style="left:564.0px;top:96.7px;font-size:12px;line-height:16px;color:#3a3a3a;letter-spacing:-2.00px;">参照先のトレース</div>
<div class="a j" style="left:564.0px;top:119.7px;font-size:12px;line-height:16px;color:#3a3a3a;letter-spacing:-1.81px;">トレース矢印の削除</div>
<div class="a j" style="left:616.7px;top:142.7px;font-size:12px;line-height:16px;color:#666;transform:scaleX(0.817);transform-origin:0 0;">ワークシート分析</div>
<div class="a j" style="left:729.7px;top:107.3px;font-size:12px;line-height:16px;color:#3a3a3a;transform:scaleX(0.688);transform-origin:0 0;">ウォッチ</div>
<div class="a j" style="left:724.2px;top:121.5px;font-size:12px;line-height:16px;color:#3a3a3a;transform:scaleX(0.693);transform-origin:0 0;">ウィンドウ</div>
<div class="a j" style="left:780.0px;top:107.3px;font-size:12px;line-height:16px;color:#3a3a3a;">計算方法</div>
<div class="a j" style="left:782.2px;top:121.5px;font-size:12px;line-height:16px;color:#3a3a3a;letter-spacing:-1.00px;">の設定</div>
<div class="a j" style="left:791.0px;top:142.3px;font-size:12px;line-height:16px;color:#666;">計算方法</div>
<div class="a" style="left:13.7px;top:179.3px;font-size:14.5px;line-height:16px;color:#333;">F1</div>
<div class="a j" style="left:113.3px;top:702.6px;font-size:13px;line-height:16px;color:#217346;letter-spacing:-0.25px;">勤務表</div>
<div class="a j" style="left:8.8px;top:727.0px;font-size:12px;line-height:16px;color:#555;">準備完了</div>
<div class="a" style="left:856.6px;top:727.5px;font-size:13px;line-height:16px;color:#555;letter-spacing:-0.42px;">100%</div>

<!-- dropdown menu -->
<div class="b" style="left:162px;top:138px;width:169px;height:606px;background:#fff;border:1px solid #c6c6c6"></div>
<div class="b" style="left:164px;top:428px;width:165px;height:24px;background:#c6c6c6"></div>
<div class="b" style="left:164px;top:716px;width:165px;height:1px;background:#e1e1e1"></div>
<svg class="a" style="left:0;top:0" width="909" height="748">
 <text x="169.5" y="735" font-family="Liberation Serif" font-style="italic" font-size="16" fill="#444">fx</text>
</svg>
<div class="a" style="left:196.5px;top:143.5px;font-size:12.3px;line-height:16px;color:#555;">DATE</div>
<div class="a" style="left:196.5px;top:167.5px;font-size:12.3px;line-height:16px;color:#555;">DATEVALUE</div>
<div class="a" style="left:196.5px;top:191.5px;font-size:12.3px;line-height:16px;color:#555;">DAY</div>
<div class="a" style="left:196.5px;top:215.5px;font-size:12.3px;line-height:16px;color:#555;">DAYS</div>
<div class="a" style="left:196.5px;top:239.5px;font-size:12.3px;line-height:16px;color:#555;">DAYS360</div>
<div class="a" style="left:196.5px;top:263.5px;font-size:12.3px;line-height:16px;color:#555;">EDATE</div>
<div class="a" style="left:196.5px;top:287.5px;font-size:12.3px;line-height:16px;color:#555;">EOMONTH</div>
<div class="a" style="left:196.5px;top:311.5px;font-size:12.3px;line-height:16px;color:#555;">HOUR</div>
<div class="a" style="left:196.5px;top:335.5px;font-size:12.3px;line-height:16px;color:#555;">ISOWEEKNUM</div>
<div class="a" style="left:196.5px;top:359.5px;font-size:12.3px;line-height:16px;color:#555;">MINUTE</div>
<div class="a" style="left:196.5px;top:383.5px;font-size:12.3px;line-height:16px;color:#555;">MONTH</div>
<div class="a" style="left:196.5px;top:407.5px;font-size:12.3px;line-height:16px;color:#555;">NETWORKDAYS</div>
<div class="a" style="left:196.5px;top:431.5px;font-size:12.3px;line-height:16px;color:#222;">NETWORKDAYS.INTL</div>
<div class="a" style="left:196.5px;top:455.5px;font-size:12.3px;line-height:16px;color:#555;">NOW</div>
<div class="a" style="left:196.5px;top:479.5px;font-size:12.3px;line-height:16px;color:#555;">SECOND</div>
<div class="a" style="left:196.5px;top:503.5px;font-size:12.3px;line-height:16px;color:#555;">TIME</div>
<div class="a" style="left:196.5px;top:527.5px;font-size:12.3px;line-height:16px;color:#555;">TIMEVALUE</div>
<div class="a" style="left:196.5px;top:551.5px;font-size:12.3px;line-height:16px;color:#555;">TODAY</div>
<div class="a" style="left:196.5px;top:575.5px;font-size:12.3px;line-height:16px;color:#555;">WEEKDAY</div>
<div class="a" style="left:196.5px;top:599.5px;font-size:12.3px;line-height:16px;color:#555;">WEEKNUM</div>
<div class="a" style="left:196.5px;top:623.5px;font-size:12.3px;line-height:16px;color:#555;">WORKDAY</div>
<div class="a" style="left:196.5px;top:647.5px;font-size:12.3px;line-height:16px;color:#555;">WORKDAY.INTL</div>
<div class="a" style="left:196.5px;top:671.5px;font-size:12.3px;line-height:16px;color:#555;">YEAR</div>
<div class="a" style="left:196.5px;top:695.5px;font-size:12.3px;line-height:16px;color:#555;">YEARFRAC</div>
<div class="a j" style="left:196.3px;top:722.0px;font-size:12px;line-height:16px;color:#444;letter-spacing:0.07px;">関数の挿入(<u>F</u>)...</div>

<!-- tooltip -->
<div class="b" style="left:323px;top:468px;width:303px;height:100px;background:#fff;border:1px solid #c6c6c6"></div>
<div class="b" style="left:328px;top:536px;width:293px;height:1px;background:#e1e1e1"></div>
<svg class="a" style="left:0;top:0" width="909" height="748">
 <circle cx="342" cy="552" r="8" fill="#3a74b4"/>
 <text x="338" y="557" font-family="Liberation Sans" font-weight="bold" font-size="12" fill="#fff">?</text>
</svg>
<div class="a" style="left:335.8px;top:474.5px;font-size:12px;line-height:16px;color:#505050;font-weight:bold;letter-spacing:0.53px;">NETWORKDAYS.INTL(開始日,終了日,週末,祭日)</div>
<div class="a j" style="left:335.0px;top:501.4px;font-size:12px;line-height:14px;color:#666;letter-spacing:-1.77px;">ユーザー設定の週末パラメーターを使用して、開始日と終了</div>
<div class="a j" style="left:335.0px;top:515.5px;font-size:12px;line-height:14px;color:#666;letter-spacing:-1.76px;">日の間にある週日の日数を計算します。</div>
<div class="a j" style="left:358.0px;top:544.0px;font-size:12.5px;line-height:16px;color:#2a66ad;letter-spacing:-1.33px;">詳細情報</div>

<!-- cursor -->
<svg class="a" style="left:322px;top:447px" width="18" height="23">
 <path d="M1.5 1.5V17.5L5 14L8 20.5L10.5 19.5L7.8 13.2H12.5z" fill="#fff" stroke="#000" stroke-width="1.1" stroke-linejoin="miter"/>
</svg>
</body></html>
